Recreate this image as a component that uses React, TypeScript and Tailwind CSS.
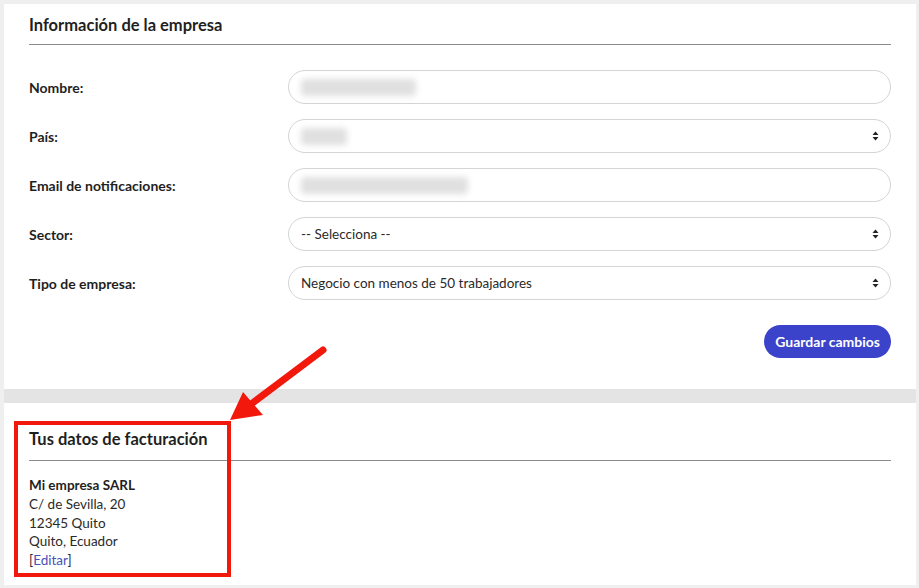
import React from "react";

const font = { fontFamily: "Lato, 'Noto Sans', sans-serif" };

const SelectArrows = () => (
  <svg width="7" height="10" viewBox="0 0 7 10" className="shrink-0">
    <path d="M3.5 0.5 L6.5 4 H0.5 Z" fill="#222" />
    <path d="M3.5 9.5 L6.5 6 H0.5 Z" fill="#222" />
  </svg>
);

function Field({ children, select }: { children?: React.ReactNode; select?: boolean }) {
  return (
    <div className="h-[34px] rounded-full border border-[#d4d4d4] bg-white flex items-center pl-[12px] pr-[11px] text-[13.5px] text-[#2a2a2a]">
      <div className="flex-1 flex items-center">{children}</div>
      {select && <SelectArrows />}
    </div>
  );
}

const Blur = ({ w }: { w: string }) => (
  <div className={`h-[17px] ${w} bg-[#e0e0e0] rounded-sm blur-[3px]`} />
);

export default function App() {
  const rows: { label: string; field: React.ReactNode }[] = [
    { label: "Nombre:", field: <Field><Blur w="w-[115px]" /></Field> },
    { label: "País:", field: <Field select><Blur w="w-[46px]" /></Field> },
    { label: "Email de notificaciones:", field: <Field><Blur w="w-[167px]" /></Field> },
    { label: "Sector:", field: <Field select>-- Selecciona --</Field> },
    { label: "Tipo de empresa:", field: <Field select>Negocio con menos de 50 trabajadores</Field> },
  ];

  return (
    <div className="relative w-[919px] h-[588px] bg-[#efefef] pt-[4px] pl-[4px] pr-[3px] overflow-hidden" style={font}>
      <div className="bg-white">
        {/* Company info */}
        <div className="px-[25px] pt-[11px] pb-[31px]">
          <h2 className="text-[16.5px] leading-[20px] font-bold text-[#1f1f1f]">Información de la empresa</h2>
          <div className="mt-[9px] h-px bg-[#8a8a8a]" />
          <div className="mt-[25px] flex flex-col gap-[15px]">
            {rows.map((r) => (
              <div key={r.label} className="grid grid-cols-[259px_1fr] items-center">
                <span className="text-[14px] font-bold text-[#1f1f1f]">{r.label}</span>
                {r.field}
              </div>
            ))}
          </div>
          <div className="mt-[25px] flex justify-end">
            <button className="h-[33px] px-[11px] rounded-full bg-[#3a43c9] text-white text-[14px] font-bold">
              Guardar cambios
            </button>
          </div>
        </div>

        <div className="h-[14px] bg-[#e4e4e4]" />

        {/* Billing */}
        <div className="px-[25px] pt-[26px] pb-[15px]">
          <h2 className="text-[16.5px] leading-[20px] font-bold text-[#1f1f1f]">Tus datos de facturación</h2>
          <div className="mt-[11px] h-px bg-[#8a8a8a]" />
          <div className="mt-[15px] text-[13.5px] leading-[18.75px] text-[#2a2a2a]">
            <div className="font-bold text-[#1f1f1f]">Mi empresa SARL</div>
            <div>C/ de Sevilla, 20</div>
            <div>12345 Quito</div>
            <div>Quito, Ecuador</div>
            <div>
              [<span className="text-[#4b4fb8]">Editar</span>]
            </div>
          </div>
        </div>
      </div>

      {/* annotation */}
      <div className="absolute left-[14px] top-[421px] w-[217px] h-[156px] border-[4px] border-[#f2180c]" />
      <svg className="absolute left-0 top-0" width="919" height="588">
        <line x1="323" y1="350" x2="250" y2="405" stroke="#f2180c" strokeWidth="7" strokeLinecap="round" />
        <path d="M230 420 L243 392 L263 415 Z" fill="#f2180c" />
      </svg>
    </div>
  );
}
